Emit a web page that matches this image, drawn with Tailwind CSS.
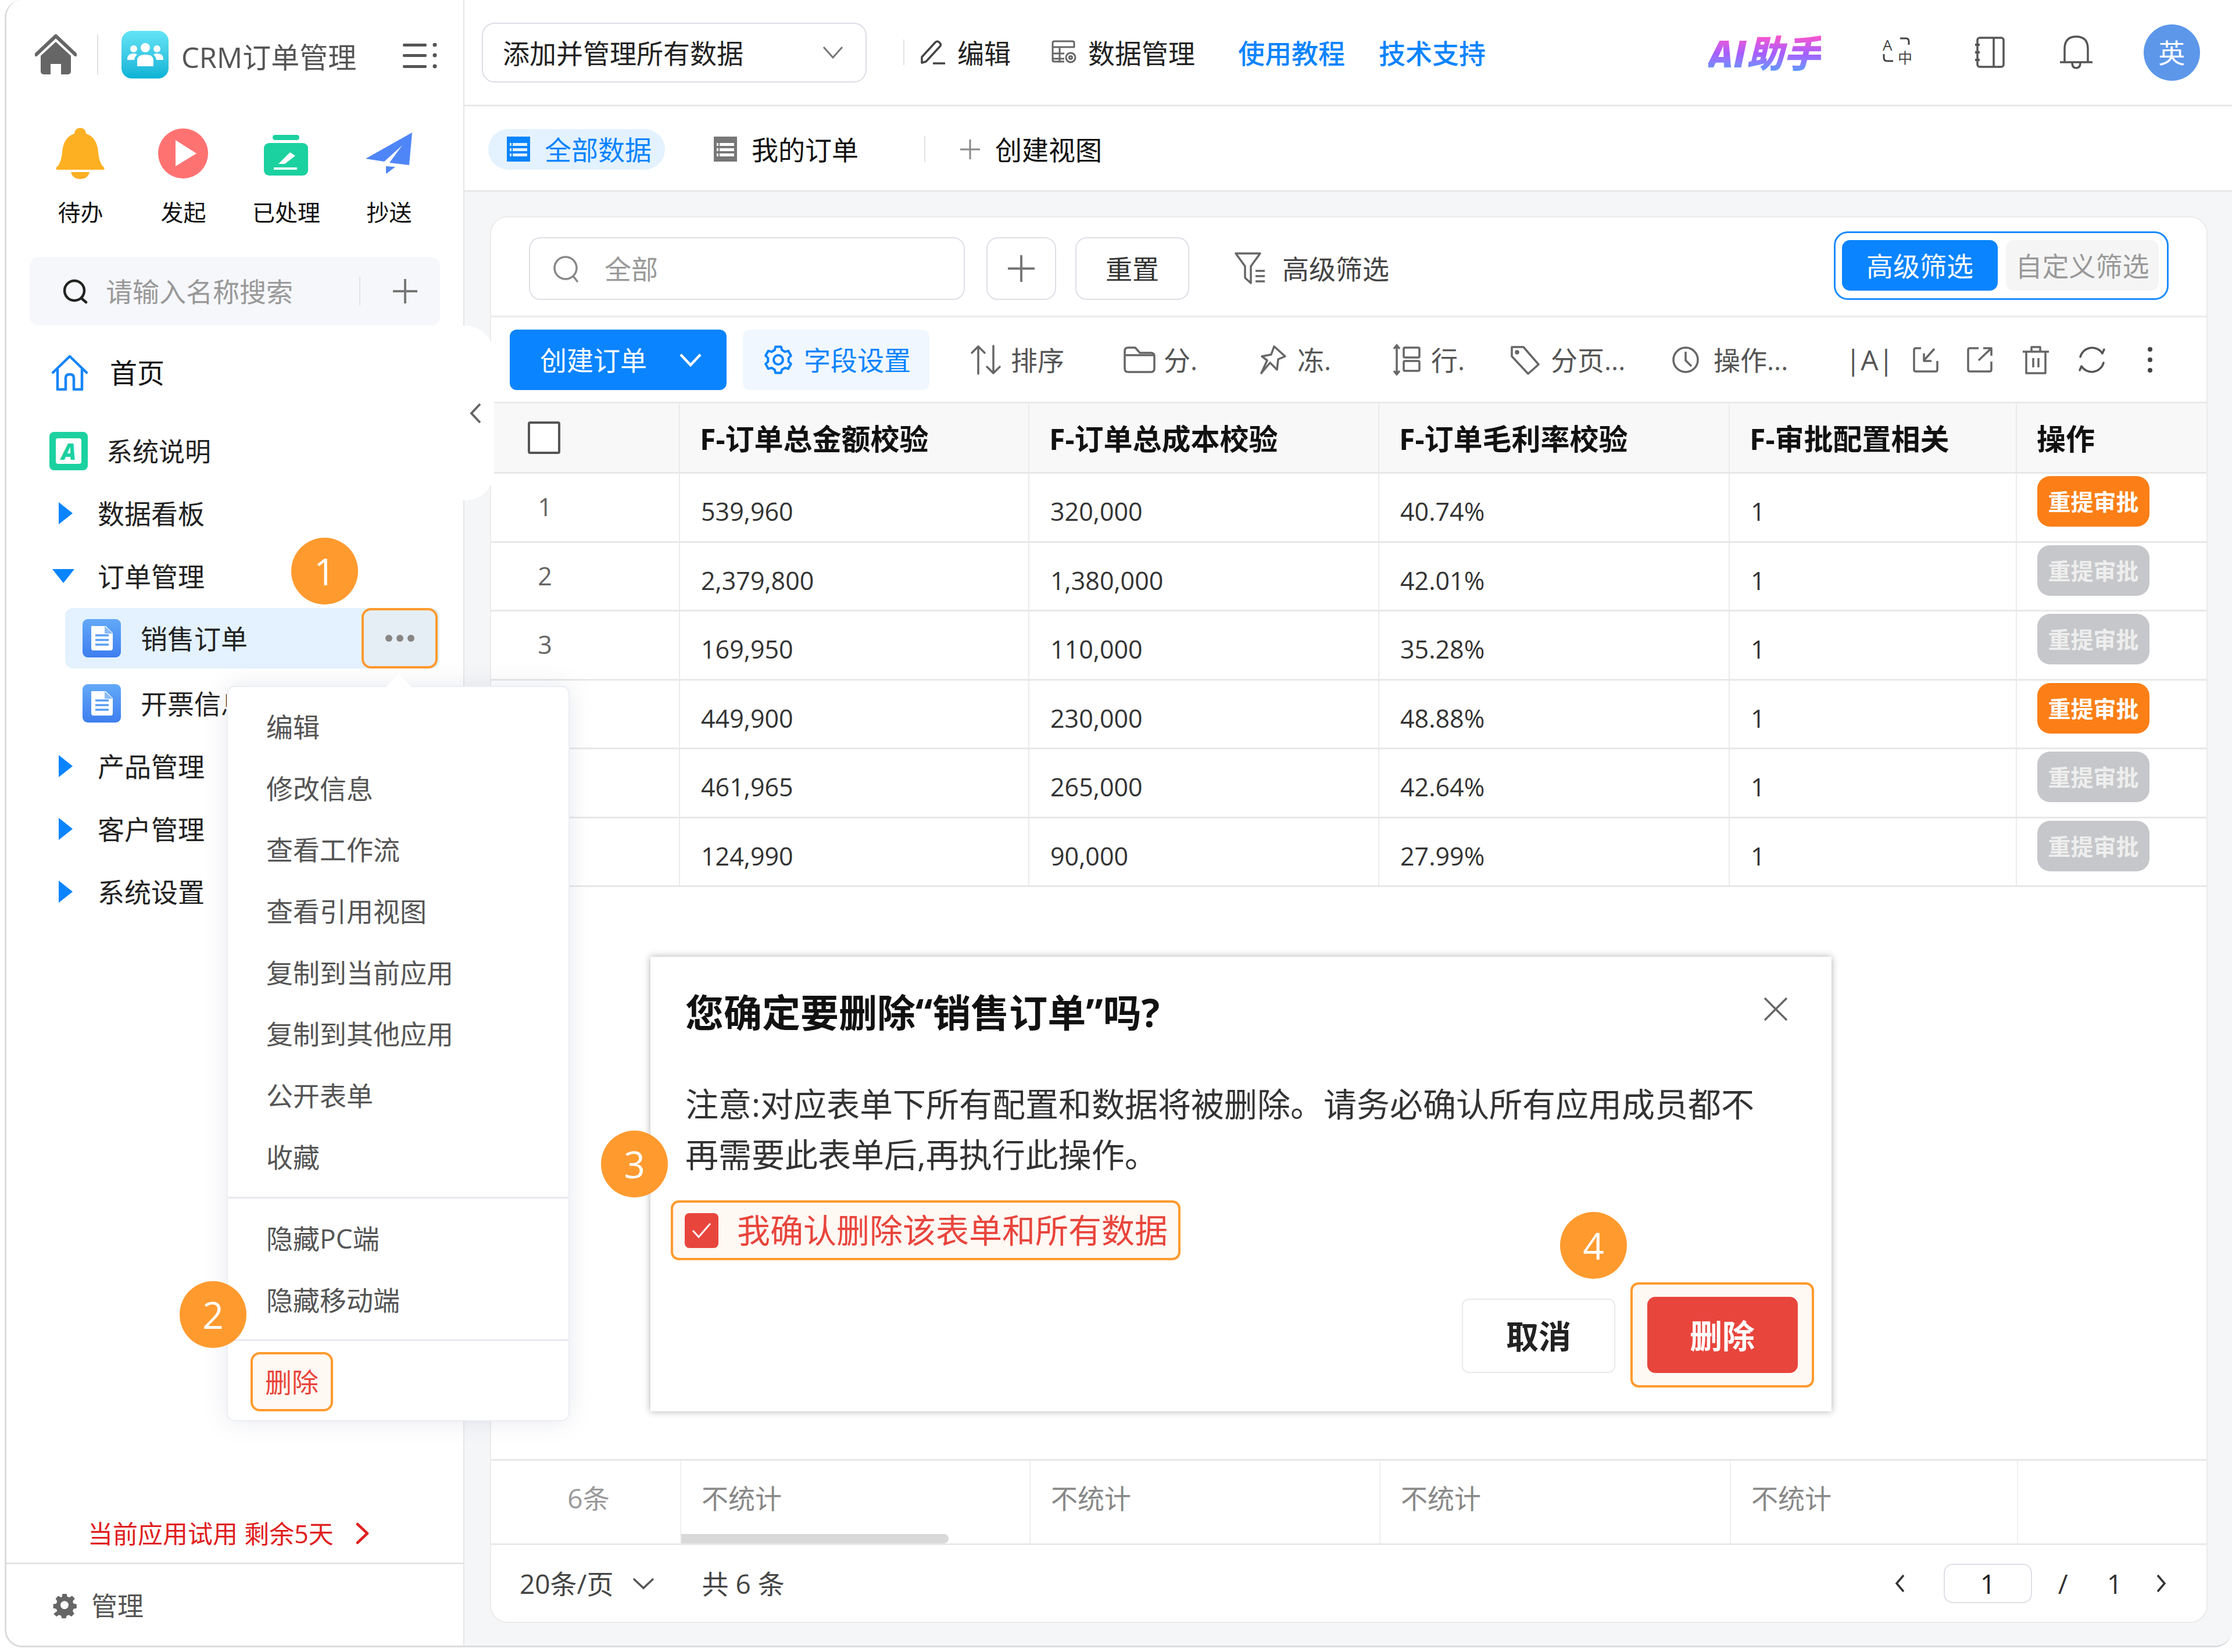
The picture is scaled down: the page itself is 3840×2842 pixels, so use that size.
<!DOCTYPE html>
<html lang="zh-CN">
  <head>
    <meta charset="UTF-8" />
    <title>CRM订单管理</title>
    <script src="https://cdn.jsdelivr.net/npm/@tailwindcss/browser@4"></script>
  </head>
  <body class="bg-white">
    <div class="relative w-[3840px] h-[2842px] bg-white pl-[8px] pb-[8px] text-[46px] leading-none text-[#222] font-['Open_Sans','Noto_Sans_CJK_SC',sans-serif]">
      <div class="flex h-full rounded-[30px] border-[3px] border-t-0 border-r-0 border-[#dcdcdc] overflow-hidden">
        <!-- sidebar -->
        <aside class="w-[788px] shrink-0 border-r-2 border-[#e6e6e6] flex flex-col">
          <div class="flex items-center h-[188px] pl-[49px]">
            <svg class="w-[72px] h-[72px]" viewBox="0 0 72 72" fill="#666"><path d="M2 36 36 4 70 36" fill="none" stroke="#666" stroke-width="6" stroke-linejoin="round" stroke-linecap="round" /><path d="M10 38 36 14 62 38V65a5 5 0 0 1-5 5H45V52H27V70H15a5 5 0 0 1-5-5Z" /></svg>
            <div class="w-[2px] h-[70px] bg-[#e2e2e2] ml-[35px]"></div>
            <div class="w-[81px] h-[82px] ml-[40px] rounded-[18px] bg-linear-to-b from-[#62e4f6] to-[#02b3d6] flex items-center justify-center">
              <svg class="w-[62px] h-[40px]" viewBox="0 0 62 40" fill="#fff"><circle cx="31" cy="8" r="8" /><circle cx="11" cy="10" r="6" /><circle cx="51" cy="10" r="6" /><path d="M17 40V30q0-10 14-10t14 10V40Z" /><path d="M0 28q0-10 11-10 4 0 6 2-4 3-5 9H0Z" /><path d="M62 28q0-10-11-10-4 0-6 2 4 3 5 9H62Z" /></svg>
            </div>
            <span class="ml-[22px] mt-[8px] text-[49px] text-[#555]">CRM订单管理</span>
            <svg class="w-[60px] h-[44px] ml-[80px] mt-[4px]" viewBox="0 0 60 44" fill="#555"><rect y="1" width="41" height="5" rx="2" /><rect y="19" width="41" height="5" rx="2" /><rect y="38" width="41" height="5" rx="2" /><circle cx="55" cy="3" r="3.5" /><circle cx="55" cy="21" r="3.5" /><circle cx="55" cy="40" r="3.5" /></svg>
          </div>

          <div class="grid grid-cols-[177px_177px_177px_177px] pl-[38px] mt-[30px]">
            <div class="flex flex-col items-center">
              <svg class="w-[86px] h-[90px]" viewBox="0 0 86 90" fill="#fdb022"><path d="M2 70q8-6 10-26Q14 18 33 12q1-10 10-10t10 10q19 6 21 32 2 20 10 26 2 4-2 4H4q-4 0-2-4Z" /><path d="M27 78h32q-3 12-16 12T27 78Z" /></svg>
              <span class="mt-[31px] h-[50px] flex items-center text-[39px] text-[#111] pl-[2px]">待办</span>
            </div>
            <div class="flex flex-col items-center">
              <svg class="w-[86px] h-[90px]" viewBox="0 0 86 90"><circle cx="43" cy="46" r="43" fill="#ff7272" /><path d="M30 23 66 46 30 68Z" fill="#fff" /></svg>
              <span class="mt-[31px] h-[50px] flex items-center text-[39px] text-[#111] pl-[2px]">发起</span>
            </div>
            <div class="flex flex-col items-center">
              <svg class="w-[86px] h-[90px]" viewBox="0 0 86 90" fill="#1bd1a0"><rect x="20" y="14" width="46" height="9" rx="4.5" /><rect x="5" y="28" width="76" height="56" rx="9" /><path d="M30 64 50 44l9 6-18 14Z" fill="#fff" /><rect x="22" y="70" width="40" height="4" fill="#fff" /></svg>
              <span class="mt-[31px] h-[50px] flex items-center text-[39px] text-[#111] pl-[2px]">已处理</span>
            </div>
            <div class="flex flex-col items-center">
              <svg class="w-[86px] h-[90px]" viewBox="0 0 86 90" fill="#4f86f7"><path d="M83 10 3 55l32 5L66 32 44 62l34 4Z" /><path d="M38 68l16 1-14 11q-2 2-2-2Z" /></svg>
              <span class="mt-[31px] h-[50px] flex items-center text-[39px] text-[#111] pl-[2px]">抄送</span>
            </div>
          </div>

          <div class="mx-[40px] mt-[53px] h-[118px] rounded-[16px] bg-[#f6f7fb] flex items-center">
            <svg class="w-[44px] h-[44px] ml-[56px]" viewBox="0 0 44 44" fill="none" stroke="#222" stroke-width="4.5" stroke-linecap="round"><circle cx="21" cy="21" r="17" /><path d="M33 34l8 7" /></svg>
            <span class="ml-[31px] text-[#999] text-[46px]">请输入名称搜索</span>
            <div class="w-[2px] h-[50px] bg-[#e4e4e8] ml-[114px]"></div>
            <svg class="w-[42px] h-[42px] ml-[56px]" viewBox="0 0 42 42" stroke="#777" stroke-width="4"><path d="M21 0V42M0 21H42" /></svg>
          </div>

          <nav class="mt-[27px]">
            <div class="flex items-center h-[108px] pl-[78px]">
              <svg class="w-[62px] h-[62px]" viewBox="0 0 62 62" fill="none" stroke="#1685f8" stroke-width="4.5" stroke-linejoin="round" stroke-linecap="round"><path d="M2 31 31 3 60 31" /><path d="M10 26V60H24V40q0-6 7-6t7 6V60H52V26" /></svg>
              <span class="ml-[38px] text-[47px] text-[#111]">首页</span>
            </div>
            <div class="flex items-center h-[108px] pl-[74px] mt-[27px]">
              <div class="w-[66px] h-[66px] rounded-[8px] bg-[#1bd1a0] flex items-center justify-center">
                <div class="w-[44px] h-[44px] rounded-[4px] bg-white flex items-center justify-center text-[#1bd1a0] text-[38px] font-black italic">A</div>
              </div>
              <span class="ml-[32px] text-[45px] text-[#222]">系统说明</span>
            </div>
            <div class="flex items-center h-[108px] pl-[90px] -mt-[1px]">
              <div class="w-0 h-0 border-y-[19px] border-y-transparent border-l-[24px] border-l-[#0a84ff]"></div>
              <span class="ml-[43px] text-[46px] text-[#222]">数据看板</span>
            </div>
            <div class="flex items-center h-[108px] pl-[79px]">
              <div class="w-0 h-0 border-x-[19px] border-x-transparent border-t-[24px] border-t-[#0a84ff]"></div>
              <span class="ml-[40px] text-[46px] text-[#222]">订单管理</span>
            </div>
            <div class="flex items-center h-[104px] ml-[101px] w-[644px] rounded-[14px] bg-[#e3f2fe] pl-[30px] mt-px">
              <svg class="w-[66px] h-[66px]" viewBox="0 0 66 66"><defs><linearGradient id="doc1" x1="0" y1="0" x2="0" y2="1"><stop offset="0" stop-color="#62a9f8" /><stop offset="1" stop-color="#3e7eef" /></linearGradient></defs><rect width="66" height="66" rx="9" fill="url(#doc1)" /><path d="M15 12H40L52 24V50q0 4-4 4H19q-4 0-4-4Z" fill="#fff" /><path d="M22 28H45M22 36H45M22 44H45" stroke="#5a9df5" stroke-width="3.5" /><path d="M38 12V25H52" fill="#8cbdf8" /></svg>
              <span class="ml-[34px] text-[46px] text-[#222]">销售订单</span>
              <div class="ml-auto mr-[3px] w-[131px] h-[104px] rounded-[16px] border-[4px] border-[#ff9a2e] bg-[#e6eef5] flex items-center justify-center gap-[7px]">
                <span class="w-[12px] h-[12px] rounded-full bg-[#8a8684]"></span>
                <span class="w-[12px] h-[12px] rounded-full bg-[#8a8684]"></span>
                <span class="w-[12px] h-[12px] rounded-full bg-[#8a8684]"></span>
              </div>
            </div>
            <div class="flex items-center h-[108px] pl-[131px] mt-[6px]">
              <svg class="w-[66px] h-[66px]" viewBox="0 0 66 66"><defs><linearGradient id="doc2" x1="0" y1="0" x2="0" y2="1"><stop offset="0" stop-color="#62a9f8" /><stop offset="1" stop-color="#3e7eef" /></linearGradient></defs><rect width="66" height="66" rx="9" fill="url(#doc2)" /><path d="M15 12H40L52 24V50q0 4-4 4H19q-4 0-4-4Z" fill="#fff" /><path d="M22 28H45M22 36H45M22 44H45" stroke="#5a9df5" stroke-width="3.5" /><path d="M38 12V25H52" fill="#8cbdf8" /></svg>
              <span class="ml-[34px] text-[46px] text-[#222]">开票信息</span>
            </div>
            <div class="flex items-center h-[108px] pl-[90px]">
              <div class="w-0 h-0 border-y-[19px] border-y-transparent border-l-[24px] border-l-[#0a84ff]"></div>
              <span class="ml-[43px] text-[46px] text-[#222]">产品管理</span>
            </div>
            <div class="flex items-center h-[108px] pl-[90px]">
              <div class="w-0 h-0 border-y-[19px] border-y-transparent border-l-[24px] border-l-[#0a84ff]"></div>
              <span class="ml-[43px] text-[46px] text-[#222]">客户管理</span>
            </div>
            <div class="flex items-center h-[108px] pl-[90px]">
              <div class="w-0 h-0 border-y-[19px] border-y-transparent border-l-[24px] border-l-[#0a84ff]"></div>
              <span class="ml-[43px] text-[46px] text-[#222]">系统设置</span>
            </div>
          </nav>

          <div class="mt-auto h-[100px] flex items-center pl-[140px]">
            <span class="text-[43px] text-[#e02020]">当前应用试用 剩余5天</span>
            <svg class="w-[25px] h-[38px] ml-[37px]" viewBox="0 0 25 38" fill="none" stroke="#e02020" stroke-width="4.5" stroke-linecap="round" stroke-linejoin="round"><path d="M4 3 21 19 4 35" /></svg>
          </div>
          <div class="h-[143px] border-t-[3px] border-[#e4e4e4] flex items-center pl-[79px] pt-[3px]">
            <svg class="w-[42px] h-[42px]" viewBox="0 0 24 24" fill="#666"><path fill-rule="evenodd" d="M10 1h4l.6 3 2.200 1 2.600-1.600 2.800 2.800L20 8.800l.9 2.200 3 .6v4l-3 .6-.9 2.200 1.600 2.600-2.800 2.800-2.600-1.600-2.200.9-.6 3h-4l-.6-3-2.200-.9-2.600 1.600-2.800-2.800L4.800 18.400 3.900 16.200l-3-.6v-4l3-.6.9-2.200L3.200 6.200 6 3.400 8.600 5l1-1ZM12 8.500a4 4 0 1 0 0 8 4 4 0 0 0 0-8Z" transform="translate(0 -1.500)" /></svg>
            <span class="ml-[25px] text-[#555] text-[45px]">管理</span>
          </div>
        </aside>

        <main class="flex-1 flex flex-col min-w-0">
          <!-- top bar -->
          <div class="h-[183px] shrink-0 border-b-[3px] border-[#e8e8e8] flex items-center">
            <div class="ml-[30px] w-[662px] h-[103px] rounded-[22px] border-2 border-[#dcdde6] flex items-center pl-[34px] pr-[38px]">
              <span class="text-[#222] mt-[2px]">添加并管理所有数据</span>
              <svg class="ml-auto w-[36px] h-[22px]" viewBox="0 0 36 22" fill="none" stroke="#777" stroke-width="3"><path d="M2 2 18 20 34 2" /></svg>
            </div>
            <div class="w-[2px] h-[44px] bg-[#e2e2e2] ml-[63px]"></div>
            <div class="flex items-center ml-[25px]">
              <svg class="w-[46px] h-[44px]" viewBox="0 0 46 44" fill="none" stroke="#444" stroke-width="3.500" stroke-linejoin="round"><path d="M5 30 28 5q3-3 6-1l2 2q3 3 0 6L12 38l-7 2Z" /><path d="M24 41H45" /></svg>
              <span class="ml-[20px] mt-[2px]">编辑</span>
              <svg class="w-[46px] h-[44px] ml-[70px]" viewBox="0 0 46 44" fill="none" stroke="#666" stroke-width="3"><path d="M22 38H5q-3 0-3-3V6q0-3 3-3H36q3 0 3 3V14" /><path d="M2 13H39M2 24H22M2 33H22M14 13V38" /><circle cx="33" cy="31" r="8" /><circle cx="33" cy="31" r="2.500" /></svg>
              <span class="ml-[17px] mt-[2px]">数据管理</span>
            </div>
            <span class="ml-[74px] mt-[2px] font-medium text-[#0a84ff]">使用教程</span>
            <span class="ml-[58px] mt-[2px] font-medium text-[#0a84ff]">技术支持</span>
            <span class="ml-[383px] mt-[4px] text-[64px] font-black italic bg-linear-to-b from-[#ff4fc8] via-[#a65cff] to-[#4f9bff] bg-clip-text text-transparent">AI助手</span>
            <svg class="w-[54px] h-[54px] ml-[105px] overflow-visible" viewBox="0 0 54 54" fill="none" stroke="#444" stroke-width="3"><text x="1" y="24" font-size="26" fill="#444" stroke="none">A</text><text x="27" y="46" font-size="25" fill="#444" stroke="none">中</text><path d="M31 3h10q5 0 5 5v6M3 30v6q0 6 6 6h10" /></svg>
            <svg class="w-[52px] h-[54px] ml-[105px]" viewBox="0 0 52 54" fill="none" stroke="#555" stroke-width="3.500"><rect x="5" y="2" width="45" height="50" rx="4" /><path d="M33 2V52" /><path d="M1 14H9M1 27H9M1 40H9" stroke-width="4" /></svg>
            <svg class="w-[60px] h-[60px] ml-[93px]" viewBox="0 0 60 60" fill="none" stroke="#555" stroke-width="3.500" stroke-linejoin="round"><path d="M10 47V24Q10 3 30 3T50 24V47M2 47H58" /><path d="M23 48q0 9 7 9t7-9" /></svg>
            <div class="w-[97px] h-[97px] ml-[86px] rounded-full bg-[#5c97ea] text-white flex items-center justify-center">英</div>
          </div>

          <!-- view tabs -->
          <div class="h-[147px] shrink-0 border-b-[3px] border-[#e8e8e8] flex items-center pt-[3px]">
            <div class="ml-[41px] w-[304px] h-[70px] rounded-[35px] bg-[#e3f2fe] flex items-center pl-[32px] text-[#0a84ff]">
              <svg class="w-[40px] h-[43px]" viewBox="0 0 40 43" fill="#0a84ff"><path fill-rule="evenodd" d="M0 0H40V43H0ZM10 11V16H35V11ZM5 11V16H8V11ZM5 20V25H8V20ZM10 20V25H35V20ZM5 29V34H8V29ZM10 29V34H35V29Z" /></svg>
              <span class="ml-[25px] text-[46px]">全部数据</span>
            </div>
            <svg class="w-[40px] h-[43px] ml-[84px]" viewBox="0 0 40 43" fill="#777"><path fill-rule="evenodd" d="M0 0H40V43H0ZM10 11V16H35V11ZM5 11V16H8V11ZM5 20V25H8V20ZM10 20V25H35V20ZM5 29V34H8V29ZM10 29V34H35V29Z" /></svg>
            <span class="ml-[25px] text-[#111]">我的订单</span>
            <div class="w-[2px] h-[45px] bg-[#e2e2e2] ml-[113px]"></div>
            <svg class="w-[34px] h-[34px] ml-[60px]" viewBox="0 0 34 34" stroke="#888" stroke-width="3"><path d="M17 0V34M0 17H34" /></svg>
            <span class="ml-[26px] text-[#111]">创建视图</span>
          </div>

          <div class="flex-1 min-h-0 bg-[#f5f6f8] pt-[42px] pl-[44px] pr-[42px] pb-[39px]">
            <div class="h-full rounded-[30px] border-2 border-[#ebebeb] bg-white flex flex-col overflow-hidden">
              <!-- filter row -->
              <div class="h-[172px] shrink-0 border-b-[3px] border-[#ebebeb] flex items-center pl-[65px] pt-[6px]">
                <div class="w-[750px] h-[108px] rounded-[20px] border-2 border-[#dfe0e6] flex items-center pl-[39px] text-[#999]">
                  <svg class="w-[46px] h-[48px]" viewBox="0 0 46 48" fill="none" stroke="#888" stroke-width="3.500" stroke-linecap="round"><circle cx="22" cy="23" r="19" /><path d="M36 38l6 8" /></svg>
                  <span class="ml-[43px]">全部</span>
                </div>
                <div class="w-[120px] h-[108px] ml-[37px] rounded-[20px] border-2 border-[#dfe0e6] flex items-center justify-center">
                  <svg class="w-[46px] h-[46px]" viewBox="0 0 46 46" stroke="#777" stroke-width="4"><path d="M23 0V46M0 23H46" /></svg>
                </div>
                <div class="w-[196px] h-[108px] ml-[33px] rounded-[20px] border-2 border-[#dfe0e6] flex items-center justify-center text-[#333]">重置</div>
                <svg class="w-[54px] h-[56px] ml-[78px]" viewBox="0 0 54 56" fill="none" stroke="#666" stroke-width="3.500" stroke-linejoin="round"><path d="M2 2H44L28 24V53L18 44V24Z" /><path d="M36 32H52M36 41H52M36 50H52" /></svg>
                <span class="ml-[28px] text-[#444]">高级筛选</span>
                <div class="ml-auto mr-[65px] -mt-[10px] w-[576px] h-[118px] rounded-[24px] border-[3px] border-[#1c8cff] flex items-center pl-[11px] gap-[14px]">
                  <div class="w-[268px] h-[87px] rounded-[14px] bg-[#0a84ff] text-white flex items-center justify-center">高级筛选</div>
                  <div class="w-[263px] h-[87px] rounded-[14px] bg-[#f5f5f5] text-[#999] flex items-center justify-center">自定义筛选</div>
                </div>
              </div>

              <!-- toolbar -->
              <div class="h-[148px] shrink-0 border-b-[3px] border-[#ebebeb] flex items-center pl-[32px] text-[#555] whitespace-nowrap">
                <div class="w-[373px] h-[104px] rounded-[12px] bg-[#0a84ff] text-white flex items-center pl-[52px]">
                  <span>创建订单</span>
                  <svg class="w-[40px] h-[24px] ml-[55px]" viewBox="0 0 40 24" fill="none" stroke="#fff" stroke-width="4.500"><path d="M3 3 20 21 37 3" /></svg>
                </div>
                <div class="w-[321px] h-[104px] ml-[28px] rounded-[12px] bg-[#f1f7fe] text-[#0a84ff] flex items-center pl-[36px]">
                  <svg class="w-[50px] h-[50px]" viewBox="0 0 50 50" fill="none" stroke="#0a84ff" stroke-width="4" stroke-linejoin="round"><path d="M20.200 2.500H29.800L31.200 8.100 36.600 11.200 42.100 9.600 46.900 17.900 42.700 21.900V28.100L46.900 32.100 42.100 40.400 36.600 38.800 31.200 41.900 29.800 47.500H20.200L18.800 41.900 13.400 38.800 7.900 40.400 3.100 32.100 7.300 28.100V21.900L3.100 17.900 7.900 9.600 13.400 11.200 18.800 8.100Z" /><circle cx="25" cy="25" r="8" /></svg>
                  <span class="ml-[19px]">字段设置</span>
                </div>
                <svg class="w-[54px] h-[52px] ml-[70px]" viewBox="0 0 54 52" fill="none" stroke="#666" stroke-width="3.500" stroke-linecap="round" stroke-linejoin="round"><path d="M14 50V3M3 14 14 3 25 14" /><path d="M40 2V49M29 38 40 49 51 38" /></svg>
                <span class="ml-[16px] w-[92px]">排序</span>
                <svg class="w-[55px] h-[48px] ml-[102px]" viewBox="0 0 55 48" fill="none" stroke="#666" stroke-width="3.500" stroke-linejoin="round"><path d="M2 16V9q0-6 6-6h12l8 9H47q6 0 6 6V39q0 6-6 6H8q-6 0-6-6Z" /><path d="M2 16H53" /></svg>
                <span class="ml-[14px] w-[54px]">分.</span>
                <svg class="w-[48px] h-[52px] ml-[111px]" viewBox="0 0 48 52" fill="none" stroke="#666" stroke-width="3.500" stroke-linejoin="round"><path d="M25 3 44 20 32 25 30 43 18 31 3 49 13 27 4 20 20 17Z" /></svg>
                <span class="ml-[17px] w-[60px]">冻.</span>
                <svg class="w-[47px] h-[56px] ml-[105px]" viewBox="0 0 47 56" fill="none" stroke="#666" stroke-width="3.500"><path d="M6 3V53M1 9 6 3 11 9M1 47 6 53 11 47" /><rect x="18" y="7" width="27" height="17" rx="2" /><rect x="18" y="30" width="27" height="17" rx="2" /></svg>
                <span class="ml-[18px] w-[54px]">行.</span>
                <svg class="w-[52px] h-[52px] ml-[81px]" viewBox="0 0 52 52" fill="none" stroke="#666" stroke-width="3.500" stroke-linejoin="round"><path d="M4 4H24L50 34 32 50 4 20Z" /><circle cx="13" cy="13" r="2" /></svg>
                <span class="ml-[19px] w-[123px]">分页...</span>
                <svg class="w-[48px] h-[50px] ml-[85px]" viewBox="0 0 48 50" fill="none" stroke="#666" stroke-width="3.500"><circle cx="24" cy="25" r="21" /><path d="M24 11V26L34 36" /></svg>
                <span class="ml-[24px] w-[123px]">操作...</span>
                <span class="ml-[104px] w-[56px] text-[#555] text-[48px] text-center">|A|</span>
                <svg class="w-[44px] h-[46px] ml-[60px]" viewBox="0 0 44 46" fill="none" stroke="#666" stroke-width="3.500" stroke-linejoin="round"><path d="M14 3H5Q2 3 2 6V40q0 3 3 3H39q3 0 3-3V25" /><path d="M37 4 19 24M19 12V25H32" /></svg>
                <svg class="w-[44px] h-[46px] ml-[49px]" viewBox="0 0 44 46" fill="none" stroke="#666" stroke-width="3.500" stroke-linejoin="round"><path d="M20 3H5Q2 3 2 6V40q0 3 3 3H39q3 0 3-3V26" /><path d="M20 24 42 3M28 3H42V16" /></svg>
                <svg class="w-[47px] h-[50px] ml-[51px]" viewBox="0 0 47 50" fill="none" stroke="#666" stroke-width="3.500" stroke-linejoin="round"><path d="M1 11H46M16 11V3H31V11" /><path d="M7 11V48H40V11" /><path d="M19 22V38M28 22V38" /></svg>
                <svg class="w-[48px] h-[50px] ml-[49px]" viewBox="0 0 48 50" fill="none" stroke="#555" stroke-width="3.500" stroke-linecap="round" stroke-linejoin="round"><path d="M4 20A21 21 0 0 1 42 14L45 7" /><path d="M44 30A21 21 0 0 1 6 36L3 43" /></svg>
                <div class="ml-[72px] flex flex-col gap-[10px]">
                  <span class="w-[8px] h-[8px] rounded-full bg-[#444]"></span>
                  <span class="w-[8px] h-[8px] rounded-full bg-[#444]"></span>
                  <span class="w-[8px] h-[8px] rounded-full bg-[#444]"></span>
                </div>
              </div>

              <!-- table -->
              <div class="grid grid-cols-[325px_601px_602px_603px_494px_1fr] h-[121px] shrink-0 bg-[#f8f8f8] border-b-[3px] border-[#e8e8e8] font-bold text-[50px] text-[#111]">
                <div class="flex items-center pl-[63px] border-r-2 border-[#ebebeb]"><span class="w-[56px] h-[56px] rounded-[4px] border-[4px] border-[#555] bg-white"></span></div>
                <div class="flex items-center pl-[34px] pt-[4px] border-r-2 border-[#ebebeb]">F-订单总金额校验</div>
                <div class="flex items-center pl-[34px] pt-[4px] border-r-2 border-[#ebebeb]">F-订单总成本校验</div>
                <div class="flex items-center pl-[34px] pt-[4px] border-r-2 border-[#ebebeb]">F-订单毛利率校验</div>
                <div class="flex items-center pl-[34px] pt-[4px] border-r-2 border-[#ebebeb]">F-审批配置相关</div>
                <div class="flex items-center pl-[34px] pt-[4px]">操作</div>
              </div>
              <div class="grid grid-cols-[325px_601px_602px_603px_494px_1fr] h-[118.500px] shrink-0 border-b-[3px] border-[#e8e8e8] text-[43px] text-[#333]">
                <div class="flex items-center justify-center pr-[138px] pb-[2px] text-[#666] border-r-2 border-[#ebebeb]">1</div>
                <div class="flex items-center pl-[36px] pt-[14px] border-r-2 border-[#ebebeb]">539,960</div>
                <div class="flex items-center pl-[36px] pt-[14px] border-r-2 border-[#ebebeb]">320,000</div>
                <div class="flex items-center pl-[36px] pt-[14px] border-r-2 border-[#ebebeb]">40.74%</div>
                <div class="flex items-center pl-[36px] pt-[14px] border-r-2 border-[#ebebeb]">1</div>
                <div class="pl-[35px] pt-[4px]"><div class="w-[193px] h-[87px] rounded-[22px] bg-[#fb7f16] text-white text-[39px] font-bold flex items-center justify-center">重提审批</div></div>
              </div>
              <div class="grid grid-cols-[325px_601px_602px_603px_494px_1fr] h-[118.500px] shrink-0 border-b-[3px] border-[#e8e8e8] text-[43px] text-[#333]">
                <div class="flex items-center justify-center pr-[138px] pb-[2px] text-[#666] border-r-2 border-[#ebebeb]">2</div>
                <div class="flex items-center pl-[36px] pt-[14px] border-r-2 border-[#ebebeb]">2,379,800</div>
                <div class="flex items-center pl-[36px] pt-[14px] border-r-2 border-[#ebebeb]">1,380,000</div>
                <div class="flex items-center pl-[36px] pt-[14px] border-r-2 border-[#ebebeb]">42.01%</div>
                <div class="flex items-center pl-[36px] pt-[14px] border-r-2 border-[#ebebeb]">1</div>
                <div class="pl-[35px] pt-[4px]"><div class="w-[193px] h-[87px] rounded-[22px] bg-[#c6c7ca] text-[#eee] text-[39px] font-bold flex items-center justify-center">重提审批</div></div>
              </div>
              <div class="grid grid-cols-[325px_601px_602px_603px_494px_1fr] h-[118.500px] shrink-0 border-b-[3px] border-[#e8e8e8] text-[43px] text-[#333]">
                <div class="flex items-center justify-center pr-[138px] pb-[2px] text-[#666] border-r-2 border-[#ebebeb]">3</div>
                <div class="flex items-center pl-[36px] pt-[14px] border-r-2 border-[#ebebeb]">169,950</div>
                <div class="flex items-center pl-[36px] pt-[14px] border-r-2 border-[#ebebeb]">110,000</div>
                <div class="flex items-center pl-[36px] pt-[14px] border-r-2 border-[#ebebeb]">35.28%</div>
                <div class="flex items-center pl-[36px] pt-[14px] border-r-2 border-[#ebebeb]">1</div>
                <div class="pl-[35px] pt-[4px]"><div class="w-[193px] h-[87px] rounded-[22px] bg-[#c6c7ca] text-[#eee] text-[39px] font-bold flex items-center justify-center">重提审批</div></div>
              </div>
              <div class="grid grid-cols-[325px_601px_602px_603px_494px_1fr] h-[118.500px] shrink-0 border-b-[3px] border-[#e8e8e8] text-[43px] text-[#333]">
                <div class="flex items-center justify-center pr-[138px] pb-[2px] text-[#666] border-r-2 border-[#ebebeb]">4</div>
                <div class="flex items-center pl-[36px] pt-[14px] border-r-2 border-[#ebebeb]">449,900</div>
                <div class="flex items-center pl-[36px] pt-[14px] border-r-2 border-[#ebebeb]">230,000</div>
                <div class="flex items-center pl-[36px] pt-[14px] border-r-2 border-[#ebebeb]">48.88%</div>
                <div class="flex items-center pl-[36px] pt-[14px] border-r-2 border-[#ebebeb]">1</div>
                <div class="pl-[35px] pt-[4px]"><div class="w-[193px] h-[87px] rounded-[22px] bg-[#fb7f16] text-white text-[39px] font-bold flex items-center justify-center">重提审批</div></div>
              </div>
              <div class="grid grid-cols-[325px_601px_602px_603px_494px_1fr] h-[118.500px] shrink-0 border-b-[3px] border-[#e8e8e8] text-[43px] text-[#333]">
                <div class="flex items-center justify-center pr-[138px] pb-[2px] text-[#666] border-r-2 border-[#ebebeb]">5</div>
                <div class="flex items-center pl-[36px] pt-[14px] border-r-2 border-[#ebebeb]">461,965</div>
                <div class="flex items-center pl-[36px] pt-[14px] border-r-2 border-[#ebebeb]">265,000</div>
                <div class="flex items-center pl-[36px] pt-[14px] border-r-2 border-[#ebebeb]">42.64%</div>
                <div class="flex items-center pl-[36px] pt-[14px] border-r-2 border-[#ebebeb]">1</div>
                <div class="pl-[35px] pt-[4px]"><div class="w-[193px] h-[87px] rounded-[22px] bg-[#c6c7ca] text-[#eee] text-[39px] font-bold flex items-center justify-center">重提审批</div></div>
              </div>
              <div class="grid grid-cols-[325px_601px_602px_603px_494px_1fr] h-[118.500px] shrink-0 border-b-[3px] border-[#e8e8e8] text-[43px] text-[#333]">
                <div class="flex items-center justify-center pr-[138px] pb-[2px] text-[#666] border-r-2 border-[#ebebeb]">6</div>
                <div class="flex items-center pl-[36px] pt-[14px] border-r-2 border-[#ebebeb]">124,990</div>
                <div class="flex items-center pl-[36px] pt-[14px] border-r-2 border-[#ebebeb]">90,000</div>
                <div class="flex items-center pl-[36px] pt-[14px] border-r-2 border-[#ebebeb]">27.99%</div>
                <div class="flex items-center pl-[36px] pt-[14px] border-r-2 border-[#ebebeb]">1</div>
                <div class="pl-[35px] pt-[4px]"><div class="w-[193px] h-[87px] rounded-[22px] bg-[#c6c7ca] text-[#eee] text-[39px] font-bold flex items-center justify-center">重提审批</div></div>
              </div>

              <!-- summary -->
              <div class="mt-auto h-[148px] shrink-0 border-y-[3px] border-[#e8e8e8] grid grid-cols-[325px_601px_602px_603px_494px_1fr] text-[#888]">
                <div class="flex items-center justify-center pl-[10px] pb-[14px] text-[#999]">6条</div>
                <div class="relative flex items-center pl-[35px] pb-[14px] border-l-2 border-[#f0f0f0]">不统计<div class="absolute left-0 bottom-0 w-[460px] h-[16px] rounded-r-[8px] bg-[#d9d9d9]"></div></div>
                <div class="flex items-center pl-[35px] pb-[14px] border-l-2 border-[#f0f0f0]">不统计</div>
                <div class="flex items-center pl-[35px] pb-[14px] border-l-2 border-[#f0f0f0]">不统计</div>
                <div class="flex items-center pl-[35px] pb-[14px] border-l-2 border-[#f0f0f0]">不统计</div>
                <div class="border-l-2 border-[#f0f0f0]"></div>
              </div>

              <!-- pagination -->
              <div class="h-[132px] shrink-0 flex items-center pl-[49px] text-[#444]">
                <span>20条/页</span>
                <svg class="w-[40px] h-[22px] ml-[32px]" viewBox="0 0 40 22" fill="none" stroke="#555" stroke-width="3.500"><path d="M3 3 20 19 37 3" /></svg>
                <span class="ml-[80px]">共 6 条</span>
                <svg class="w-[18px] h-[32px] ml-auto" viewBox="0 0 18 32" fill="none" stroke="#333" stroke-width="3.500"><path d="M15 2 3 16 15 30" /></svg>
                <div class="w-[152px] h-[68px] ml-[66px] rounded-[16px] border-2 border-[#dfe0e6] flex items-center justify-center text-[#222]">1</div>
                <span class="ml-[45px] text-[#333]">/</span>
                <span class="ml-[67px] text-[#333]">1</span>
                <svg class="w-[18px] h-[32px] ml-[58px] mr-[69px]" viewBox="0 0 18 32" fill="none" stroke="#333" stroke-width="3.500"><path d="M3 2 15 16 3 30" /></svg>
              </div>
            </div>
          </div>
        </main>
      </div>

      <!-- sidebar collapse handle -->
      <div class="absolute left-[790px] top-[560px] w-[60px] h-[301px] rounded-r-[50px] bg-white flex items-center justify-end pr-[22px]">
        <svg class="w-[20px] h-[36px]" viewBox="0 0 20 36" fill="none" stroke="#666" stroke-width="4"><path d="M18 2 3 18 18 34" /></svg>
      </div>

      <!-- context menu -->
      <div class="absolute left-[390px] top-[1180px] w-[590px] h-[1265px] rounded-[14px] bg-white border-2 border-[#eceef5] shadow-[0_0_40px_rgba(100,110,140,0.15)] pt-[15px] text-[#555]">
        <div class="absolute left-[278px] -top-[16px] w-[32px] h-[32px] rotate-45 bg-white"></div>
        <div class="h-[105.700px] flex items-center pl-[66px]">编辑</div>
        <div class="h-[105.700px] flex items-center pl-[66px]">修改信息</div>
        <div class="h-[105.700px] flex items-center pl-[66px]">查看工作流</div>
        <div class="h-[105.700px] flex items-center pl-[66px]">查看引用视图</div>
        <div class="h-[105.700px] flex items-center pl-[66px]">复制到当前应用</div>
        <div class="h-[105.700px] flex items-center pl-[66px]">复制到其他应用</div>
        <div class="h-[105.700px] flex items-center pl-[66px]">公开表单</div>
        <div class="h-[105.700px] flex items-center pl-[66px]">收藏</div>
        <div class="mt-[16px] border-t-[3px] border-[#e8e9f0] pt-[16px]">
          <div class="h-[105.700px] flex items-center pl-[66px]">隐藏PC端</div>
          <div class="h-[105.700px] flex items-center pl-[66px]">隐藏移动端</div>
        </div>
        <div class="mt-[15px] border-t-[3px] border-[#e8e9f0] pt-[19px] pl-[39px]">
          <div class="w-[142px] h-[102px] rounded-[16px] border-[4px] border-[#ff9a2e] bg-[#fff8f3] text-[#e8453c] flex items-center justify-center">删除</div>
        </div>
      </div>

      <!-- confirm dialog -->
      <div class="absolute left-[1119px] top-[1646px] w-[2032px] h-[782px] bg-white shadow-[0_0_12px_rgba(0,0,0,0.32)] pl-[60px] pr-[30px] pt-[50px]">
        <div class="flex items-center justify-between h-[90px] pr-[45px]">
          <span class="text-[66px] font-bold text-[#111]">您确定要删除“销售订单”吗?</span>
          <svg class="w-[42px] h-[42px] -mt-[10px]" viewBox="0 0 42 42" stroke="#666" stroke-width="3.500"><path d="M2 2 40 40M40 2 2 40" /></svg>
        </div>
        <p class="mt-[70px] text-[57px] leading-[87px] text-[#333] whitespace-nowrap">注意:对应表单下所有配置和数据将被删除。请务必确认所有应用成员都不<br />再需要此表单后,再执行此操作。</p>
        <div class="mt-[35px] -ml-[25px] w-[877px] h-[103px] rounded-[14px] border-[4px] border-[#ff9a2e] bg-[#fff8f3] flex items-center pl-[20px]">
          <div class="w-[58px] h-[60px] rounded-[8px] bg-[#e8453c] flex items-center justify-center">
            <svg class="w-[34px] h-[28px]" viewBox="0 0 34 28" fill="none" stroke="#fff" stroke-width="3"><path d="M2 14 12 25 32 2" /></svg>
          </div>
          <span class="ml-[32px] text-[57px] text-[#e8453c]">我确认删除该表单和所有数据</span>
        </div>
        <div class="mt-[38px] flex items-center justify-end">
          <div class="w-[264px] h-[128px] mt-[2px] rounded-[12px] border-2 border-[#eaeaea] flex items-center justify-center text-[56px] font-bold text-[#222]">取消</div>
          <div class="ml-[26px] w-[316px] h-[181px] rounded-[14px] border-[4px] border-[#ff9a2e] bg-[#fff8f3] flex items-center justify-center">
            <div class="w-[259px] h-[131px] rounded-[14px] bg-[#e8453c] flex items-center justify-center text-[56px] font-bold text-white">删除</div>
          </div>
        </div>
      </div>

      <!-- step badges -->
      <div class="absolute left-[501px] top-[925px] w-[115px] h-[115px] rounded-full bg-[#ff9a2e] text-white text-[64px] flex items-center justify-center">1</div>
      <div class="absolute left-[309px] top-[2204px] w-[115px] h-[115px] rounded-full bg-[#ff9a2e] text-white text-[64px] flex items-center justify-center">2</div>
      <div class="absolute left-[1034px] top-[1945px] w-[115px] h-[115px] rounded-full bg-[#ff9a2e] text-white text-[64px] flex items-center justify-center">3</div>
      <div class="absolute left-[2684px] top-[2085px] w-[115px] h-[115px] rounded-full bg-[#ff9a2e] text-white text-[64px] flex items-center justify-center">4</div>
    </div>
  </body>
</html>
